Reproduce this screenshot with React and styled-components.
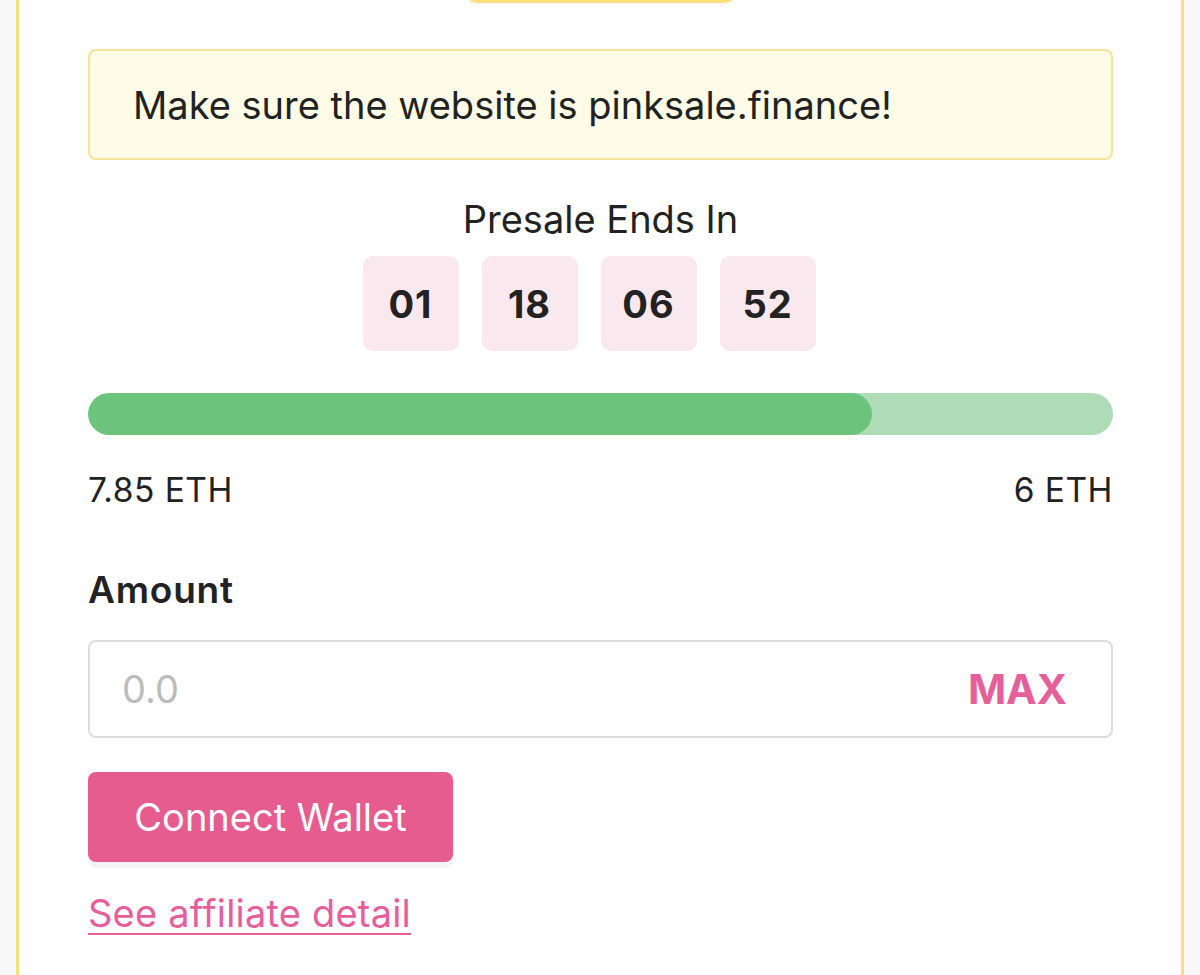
import styled, { createGlobalStyle } from 'styled-components';

const GlobalStyle = createGlobalStyle`
  html, body {
    margin: 0;
    padding: 0;
    background: #f8f8fa;
    font-family: 'Inter', 'Noto Sans', sans-serif;
    color: #222;
    overflow: hidden;
  }
`;

const Card = styled.div`
  margin: -40px 16px 0;
  background: #fff;
  border: 3px solid #f6df7c;
  padding: 0 68px 60px 69px;
  display: flex;
  flex-direction: column;
`;

const TopPill = styled.div`
  align-self: center;
  width: 274px;
  height: 40px;
  background: #fde07b;
  border-radius: 0 0 14px 14px;
  box-shadow: 0 2px 4px rgba(0, 0, 0, 0.04);
`;

const Notice = styled.div`
  margin-top: 46px;
  height: 111px;
  box-sizing: border-box;
  display: flex;
  align-items: center;
  padding: 0 43px;
  background: #fefbe6;
  border: 2px solid #f7e39a;
  border-radius: 8px;
  font-size: 38px;
`;

const Title = styled.div`
  margin-top: 36px;
  text-align: center;
  font-size: 38px;
  line-height: 46px;
`;

const Timer = styled.div`
  margin-top: 14px;
  display: flex;
  justify-content: center;
`;

const TimeBox = styled.div`
  width: 96px;
  height: 95px;
  margin-right: 23px;
  background: #f9e8ee;
  border-radius: 10px;
  display: flex;
  align-items: center;
  justify-content: center;
  font-size: 38px;
  font-weight: 700;
  letter-spacing: 1px;
`;

const Track = styled.div`
  margin-top: 42px;
  height: 42px;
  border-radius: 21px;
  background: #addcb6;
  overflow: hidden;
`;

const Fill = styled.div`
  height: 100%;
  border-radius: 21px;
  background: #6cc47c;
`;

const Labels = styled.div`
  margin-top: 35px;
  display: flex;
  justify-content: space-between;
  font-size: 33.5px;
  line-height: 40px;
  letter-spacing: 0.5px;
`;

const Label = styled.div`
  margin-top: 58px;
  font-size: 37px;
  font-weight: 600;
  line-height: 44px;
  letter-spacing: 0.8px;
`;

const InputBox = styled.div`
  margin-top: 28px;
  height: 98px;
  box-sizing: border-box;
  border: 2px solid #ddd;
  border-radius: 8px;
  display: flex;
  align-items: center;
  padding: 0 44px 0 30px;
`;

const AmountInput = styled.input`
  flex: 1;
  border: 0;
  outline: 0;
  background: none;
  font-family: inherit;
  font-size: 38px;
  color: #222;
  &::placeholder {
    color: #bbb;
  }
`;

const MaxButton = styled.button`
  border: 0;
  background: none;
  padding: 0;
  font-family: inherit;
  font-size: 41px;
  font-weight: 700;
  color: #e5609a;
`;

const ConnectButton = styled.button`
  margin-top: 34px;
  align-self: flex-start;
  width: 365px;
  height: 90px;
  border: 0;
  border-radius: 8px;
  background: #e65c8f;
  color: #fff;
  font-family: inherit;
  font-size: 38px;
  box-shadow: 0 6px 0 #f4f4f6;
`;

const AffiliateLink = styled.a`
  margin-top: 28px;
  align-self: flex-start;
  color: #e5609a;
  font-size: 38px;
  letter-spacing: 0.2px;
  text-decoration: underline;
  text-underline-offset: 6px;
  text-decoration-thickness: 2px;
`;

const timer = ['01', '18', '06', '52'];

const App = () => {
  const raised = 0.765;
  return (
    <>
      <GlobalStyle />
      <Card>
        <TopPill />
        <Notice>Make sure the website is pinksale.finance!</Notice>
        <Title>Presale Ends In</Title>
        <Timer>
          {timer.map((t, i) => (
            <TimeBox key={i}>{t}</TimeBox>
          ))}
        </Timer>
        <Track>
          <Fill style={{ width: `${raised * 100}%` }} />
        </Track>
        <Labels>
          <span>7.85 ETH</span>
          <span>6 ETH</span>
        </Labels>
        <Label>Amount</Label>
        <InputBox>
          <AmountInput placeholder="0.0" />
          <MaxButton>MAX</MaxButton>
        </InputBox>
        <ConnectButton>Connect Wallet</ConnectButton>
        <AffiliateLink href="#">See affiliate detail</AffiliateLink>
      </Card>
    </>
  );
};

export default App;
